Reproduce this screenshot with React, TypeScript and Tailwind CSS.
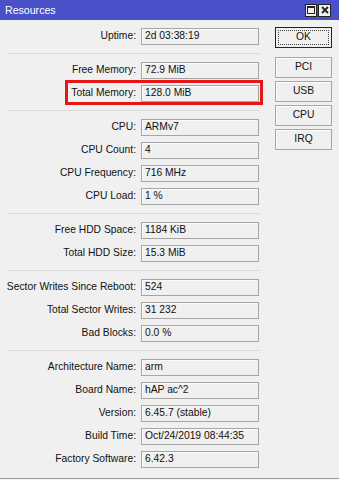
import React from "react";

type Row = { label: string; value: string };

const groups: Row[][] = [
  [{ label: "Uptime", value: "2d 03:38:19" }],
  [
    { label: "Free Memory", value: "72.9 MiB" },
    { label: "Total Memory", value: "128.0 MiB" },
  ],
  [
    { label: "CPU", value: "ARMv7" },
    { label: "CPU Count", value: "4" },
    { label: "CPU Frequency", value: "716 MHz" },
    { label: "CPU Load", value: "1 %" },
  ],
  [
    { label: "Free HDD Space", value: "1184 KiB" },
    { label: "Total HDD Size", value: "15.3 MiB" },
  ],
  [
    { label: "Sector Writes Since Reboot", value: "524" },
    { label: "Total Sector Writes", value: "31 232" },
    { label: "Bad Blocks", value: "0.0 %" },
  ],
  [
    { label: "Architecture Name", value: "arm" },
    { label: "Board Name", value: "hAP ac^2" },
    { label: "Version", value: "6.45.7 (stable)" },
    { label: "Build Time", value: "Oct/24/2019 08:44:35" },
    { label: "Factory Software", value: "6.42.3" },
  ],
];

function Field({ label, value }: Row) {
  return (
    <div className="flex h-[23px] items-center">
      <div className="w-[136px] text-right text-[#111]">{label}:</div>
      <div className="ml-[5px] flex h-[17px] w-[118px] items-center border border-[#a5a5a5] pl-[3px] text-[#111] shadow-[inset_1px_1px_0_#fafafa]">
        {value}
      </div>
    </div>
  );
}

function Separator() {
  return (
    <div className="flex h-[11px] items-center pl-[8px]">
      <div className="h-[2px] w-[252px] border-t border-[#d9d9d9] border-b-white" />
    </div>
  );
}

function SideButton({ children }: { children: React.ReactNode }) {
  return (
    <button className="flex h-[21px] w-[57px] items-center justify-center border border-[#a5a5a5] bg-[#f0f0f0] text-[#111] shadow-[inset_1px_1px_0_#ffffff]">
      {children}
    </button>
  );
}

export default function App() {
  return (
    <div className="h-[480px] w-[339px] bg-[#f0f0f0] font-['Liberation_Sans',Arial,sans-serif] text-[10.3px] leading-none">
      <div className="relative h-[479px] border-b border-[#9c9c9c]">
        <div className="flex h-[20px] items-center justify-between bg-[#4a50c8] pl-[5px] pr-[8px]">
          <span className="text-[10.6px] text-white">Resources</span>
          <div className="flex gap-[1px]">
            <div className="flex h-[13px] w-[12px] items-center justify-center border border-[#222] bg-[#f0f0f0]">
              <svg width="8" height="8" viewBox="0 0 8 8">
                <rect x="0.5" y="0.5" width="7" height="7" fill="none" stroke="#222" />
                <line x1="0" y1="1.5" x2="8" y2="1.5" stroke="#222" />
              </svg>
            </div>
            <div className="flex h-[13px] w-[13px] items-center justify-center border border-[#222] bg-[#f0f0f0]">
              <svg width="8" height="8" viewBox="0 0 8 8">
                <path d="M1 1 L7 7 M7 1 L1 7" stroke="#222" strokeWidth="1.8" />
              </svg>
            </div>
          </div>
        </div>

        <div className="flex pt-[5px]">
          <div className="w-[263px]">
            {groups.map((g, i) => (
              <div key={i}>
                {i > 0 && <Separator />}
                {g.map((r) => (
                  <Field key={r.label} {...r} />
                ))}
              </div>
            ))}
          </div>

          <div className="ml-[12px] flex flex-col pt-[2px]">
            <button className="flex h-[21px] w-[57px] items-center justify-center border border-[#222] bg-[#f0f0f0] p-[2px] text-[#111]">
              <span className="flex h-full w-full items-center justify-center border border-dotted border-[#444]">
                OK
              </span>
            </button>
            <div className="mt-[9px] flex flex-col gap-[3px]">
              <SideButton>PCI</SideButton>
              <SideButton>USB</SideButton>
              <SideButton>CPU</SideButton>
              <SideButton>IRQ</SideButton>
            </div>
          </div>
        </div>

        <div className="absolute left-[65px] top-[80px] h-[25px] w-[198px] border-[3px] border-[#e81515]" />
      </div>
    </div>
  );
}
